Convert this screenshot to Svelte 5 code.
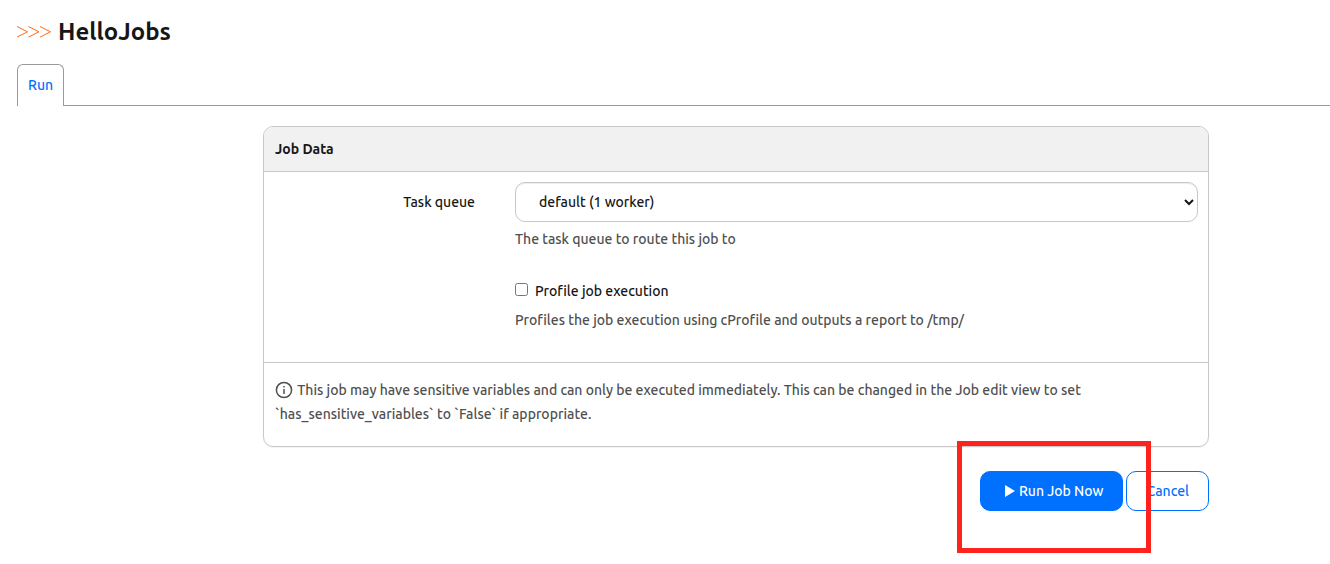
<script>
  let queue = $state('default');
  let profile = $state(false);
</script>

<header class="page-head">
  <svg class="prompt" viewBox="0 0 36 14" aria-hidden="true">
    <path d="M1 1.5 11.5 6.8 1 12.1M12.5 1.5 23 6.8 12.5 12.1M24 1.5 34.5 6.8 24 12.1" />
  </svg>
  <h1>HelloJobs</h1>
</header>

<nav class="tabs">
  <a class="tab" href="#run">Run</a>
</nav>

<form class="job" id="run" onsubmit={(e) => e.preventDefault()}>
  <section class="card">
    <h2 class="card-head">Job Data</h2>
    <div class="fields">
      <label class="name" for="queue">Task queue</label>
      <div class="field">
        <select id="queue" bind:value={queue}>
          <option value="default">default (1 worker)</option>
        </select>
        <p class="help">The task queue to route this job to</p>
      </div>
      <div class="field second">
        <label class="check">
          <input type="checkbox" bind:checked={profile} />
          Profile job execution
        </label>
        <p class="help">Profiles the job execution using cProfile and outputs a report to /tmp/</p>
      </div>
    </div>
    <p class="note">
      <svg class="info" viewBox="0 0 18 18" aria-hidden="true">
        <circle cx="9" cy="9" r="7.6" />
        <path d="M9 8v5M9 5v1.6" />
      </svg>
      This job may have sensitive variables and can only be executed immediately. This can be changed in the Job edit view to set `has_sensitive_variables` to `False` if appropriate.
    </p>
  </section>

  <div class="actions">
    <div class="marked">
      <button class="btn primary" type="submit">
        <svg class="play" viewBox="0 0 10 12" aria-hidden="true"><path d="M0 0 10 6 0 12z" /></svg>
        Run Job Now
      </button>
      <span class="highlight"></span>
    </div>
    <button class="btn" type="button">Cancel</button>
  </div>
</form>

<style>
  :global(body) {
    background: #fff;
    color: #161616;
    font: 500 14px/24px Ubuntu, "Noto Sans", sans-serif;
    font-variant-ligatures: none;
  }
  h1, h2, p { margin: 0; }
  .page-head {
    display: flex;
    align-items: center;
    gap: 6px;
    padding: 16px 16px 0;
  }
  h1 {
    font-size: 24px;
    line-height: 32px;
    font-weight: 700;
  }
  .prompt {
    width: 36px;
    height: 14px;
    fill: none;
    stroke: #ff6a13;
    stroke-width: 1;
  }
  .tabs {
    display: flex;
    margin: 16px 0 0 17px;
    box-shadow: inset 0 -1px #999;
  }
  .tab {
    padding: 8px 10px;
    border: 1px solid #999;
    border-bottom: 0;
    border-radius: 6px 6px 0 0;
    background: #fff;
    color: #0070ff;
    line-height: 25px;
    text-decoration: none;
  }
  .job { margin: 20px 121px 0 263px; }
  .card {
    border: 1px solid #c8c8c8;
    border-radius: 10px;
    box-shadow: 0 1px 1px #0000000d;
    overflow: hidden;
  }
  .card-head {
    padding: 10px 11px;
    border-bottom: 1px solid #c8c8c8;
    background: #f1f1f1;
    font-size: 14px;
    font-weight: 700;
  }
  .fields {
    display: grid;
    grid-template-columns: 201px 1fr;
    column-gap: 40px;
    padding: 10px 10px 30px;
  }
  .name {
    line-height: 40px;
    text-align: right;
  }
  .second {
    grid-column: 2;
    margin-top: 28px;
  }
  select {
    width: 100%;
    height: 40px;
    padding: 0 19px;
    border: 1px solid #c8c8c8;
    border-radius: 10px;
    background: #fff;
    box-shadow: inset 0 1px 1px #00000013;
    color: inherit;
    font: inherit;
  }
  .help, .note { color: #505050; }
  .help { margin-top: 5px; }
  .check {
    display: flex;
    align-items: flex-start;
    gap: 7px;
  }
  .check input {
    width: 13px;
    height: 13px;
    margin: 4px 0 0;
  }
  .note {
    padding: 15px 110px 20px 11px;
    border-top: 1px solid #c8c8c8;
  }
  .info {
    width: 18px;
    height: 18px;
    margin-right: 1px;
    vertical-align: -4px;
    fill: none;
    stroke: #505050;
    stroke-width: 1.5;
  }
  .actions {
    display: flex;
    justify-content: flex-end;
    gap: 3px;
    padding: 24px 0 53px;
  }
  .marked { position: relative; }
  .btn {
    height: 40px;
    padding: 0 19px;
    border: 1px solid #0070ff;
    border-radius: 10px;
    background: #fff;
    color: #0070ff;
    font: inherit;
    white-space: nowrap;
  }
  .primary {
    padding-left: 24px;
    background: #0070ff;
    color: #fff;
  }
  .play {
    width: 10px;
    height: 12px;
    margin-right: 1px;
    vertical-align: -1px;
    fill: currentColor;
  }
  .highlight {
    position: absolute;
    inset: -30px -28px -42px -23px;
    border: 5px solid #ff221d;
    pointer-events: none;
  }
</style>
